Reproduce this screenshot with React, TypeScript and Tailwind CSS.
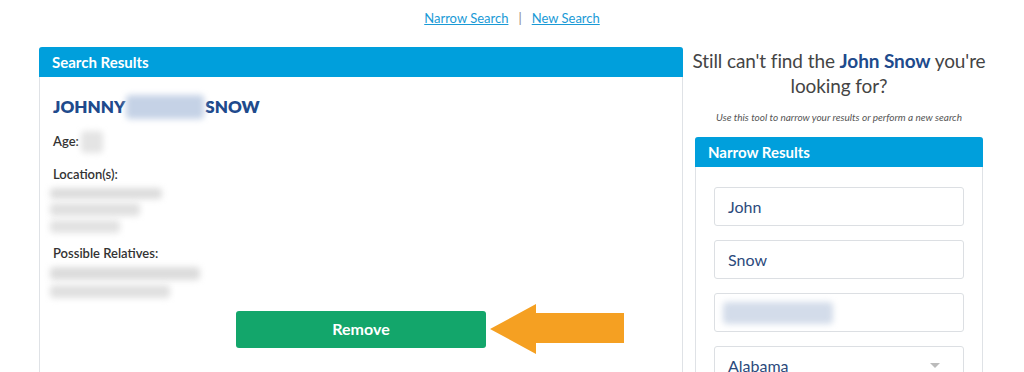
import React from 'react';

const font = { fontFamily: 'Lato, "Open Sans", sans-serif' };

function Blur({ className }: { className: string }) {
  return <div className={`rounded-sm blur-[3px] ${className}`} />;
}

function Field({ value, children }: { value?: string; children?: React.ReactNode }) {
  return (
    <div className="h-[39px] w-full rounded-[3px] border border-[#dcdfe3] bg-white flex items-center px-[13px] text-[16px] text-[#2c4a7c]">
      {value}
      {children}
    </div>
  );
}

export default function App() {
  return (
    <div className="w-[1024px] h-[372px] overflow-hidden bg-white" style={font}>
      <div className="flex justify-center items-center gap-[10px] pt-[10px] h-[27px] text-[13px] text-[#1a9ad6]">
        <a className="underline">Narrow Search</a>
        <span className="text-[#888]">|</span>
        <a className="underline">New Search</a>
      </div>

      <div className="flex gap-[12px] w-[944px] ml-[39px] mt-[20px]">
        <div className="w-[644px] h-[340px] rounded-t-[3px] border border-[#dfe2e6] border-t-0">
          <div className="h-[30px] bg-[#009fdc] rounded-t-[3px] -mx-px px-[13px] flex items-center text-white font-bold text-[15px]">
            Search Results
          </div>
          <div className="px-[13px] pt-[17px]">
            <div className="flex items-center gap-[1px] text-[17px] font-extrabold text-[#204a8c] h-[25px]">
              <span>JOHNNY</span>
              <Blur className="w-[78px] h-[24px] bg-[#c5d2e6]" />
              <span>SNOW</span>
            </div>
            <div className="flex items-center mt-[12px] h-[22px] text-[13px] font-semibold text-[#333]">
              <span>Age:</span>
              <Blur className="ml-[2px] w-[22px] h-[22px] bg-[#e4e4e4]" />
            </div>
            <div className="mt-[12px] text-[13px] font-semibold text-[#333]">Location(s):</div>
            <div className="-ml-[3px] mt-[3px] flex flex-col gap-[4px]">
              <Blur className="w-[112px] h-[11px] bg-[#dcdcdc]" />
              <Blur className="w-[90px] h-[13px] bg-[#e0e0e0]" />
              <Blur className="w-[70px] h-[13px] bg-[#e2e2e2]" />
            </div>
            <div className="mt-[11px] text-[13px] font-semibold text-[#333]">Possible Relatives:</div>
            <div className="-ml-[3px] mt-[4px] flex flex-col gap-[5px]">
              <Blur className="w-[150px] h-[13px] bg-[#dcdcdc]" />
              <Blur className="w-[120px] h-[13px] bg-[#e0e0e0]" />
            </div>
            <div className="flex items-center mt-[5px] ml-[183px]">
              <div className="w-[250px] h-[37px] rounded-[3px] bg-[#13a66b] flex items-center justify-center text-white font-bold text-[16px]">
                Remove
              </div>
              <svg width="136" height="52" viewBox="0 0 136 52" className="ml-[3px]">
                <polygon points="1,26 47,1 47,10 135,10 135,40 47,40 47,51" fill="#f5a022" />
              </svg>
            </div>
          </div>
        </div>

        <div className="w-[288px]">
          <div className="-mx-[8px] pt-[1px] text-center text-[19px] leading-[25px] tracking-[-0.1px] text-[#444]">
            Still can't find the <span className="font-bold text-[#204a8c]">John Snow</span> you're looking for?
          </div>
          <div className="text-center italic text-[10px] text-[#555] mt-[12px]">
            Use this tool to narrow your results or perform a new search
          </div>
          <div className="mt-[12px] h-[300px] border border-[#dfe2e6] border-t-0 rounded-t-[3px]">
            <div className="h-[30px] bg-[#009fdc] rounded-t-[3px] -mx-px px-[13px] flex items-center text-white font-bold text-[15px]">
              Narrow Results
            </div>
            <div className="px-[18px] pt-[20px] flex flex-col gap-[14px]">
              <Field value="John" />
              <Field value="Snow" />
              <Field>
                <Blur className="-ml-[5px] w-[110px] h-[22px] bg-[#d3dcea]" />
              </Field>
              <Field>
                <span className="flex-1">Alabama</span>
                <svg width="10" height="6" viewBox="0 0 10 6" className="mr-[10px]">
                  <polygon points="0,0 10,0 5,5" fill="#bbb" />
                </svg>
              </Field>
            </div>
          </div>
        </div>
      </div>
    </div>
  );
}
